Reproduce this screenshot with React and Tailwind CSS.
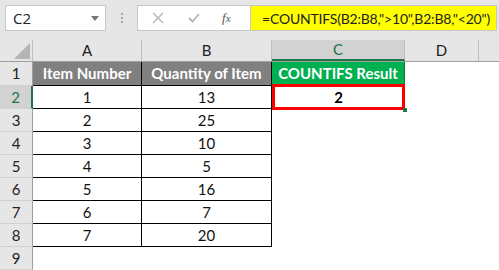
import React from 'react';

const rows = [
  ['1', '13'],
  ['2', '25'],
  ['3', '10'],
  ['4', '5'],
  ['5', '16'],
  ['6', '7'],
  ['7', '20'],
];

const cellFont = { fontFamily: 'Lato, "Liberation Sans", sans-serif' };

const RowHead = ({ n, active }) => (
  <div
    className={`h-[23px] flex items-center justify-center text-[15px] border-b border-[#d0d0d0] ${
      active ? 'bg-[#d2d2d2] text-[#217346] border-r-2 border-r-[#217346]' : 'bg-[#e6e6e6] text-[#222] border-r border-r-[#9e9e9e]'
    }`}
    style={cellFont}
  >
    {n}
  </div>
);

const App = () => {
  return (
    <div className="w-[499px] h-[270px] bg-white overflow-hidden relative select-none">
      {/* Formula bar */}
      <div className="h-[40px] bg-[#e6e6e6] flex items-start pt-[5px] pl-[5px]">
        <div className="w-[101px] h-[26px] bg-white border border-[#c6c6c6] flex items-center justify-between pl-[7px] pr-[6px]">
          <span className="text-[15px] text-[#222]" style={{ fontFamily: '"Open Sans", sans-serif' }}>C2</span>
          <svg width="8" height="5" viewBox="0 0 8 5"><path d="M0 0h8L4 5z" fill="#777" /></svg>
        </div>
        <div className="w-[31px] h-[26px] flex flex-col items-center justify-center gap-[2px]">
          <span className="w-[2px] h-[2px] bg-[#a8a8a8]" />
          <span className="w-[2px] h-[2px] bg-[#a8a8a8]" />
          <span className="w-[2px] h-[2px] bg-[#a8a8a8]" />
        </div>
        <div className="w-[113px] h-[26px] bg-white border border-[#c6c6c6] border-r-0 flex items-center">
          <svg width="12" height="12" viewBox="0 0 12 12" className="ml-[14px]">
            <path d="M1 1l10 10M11 1L1 11" stroke="#b4b4b4" strokeWidth="1.4" />
          </svg>
          <svg width="12" height="10" viewBox="0 0 12 10" className="ml-[24px]">
            <path d="M1 5l3.5 3.5L11 1" stroke="#b4b4b4" strokeWidth="1.8" fill="none" />
          </svg>
          <span className="ml-[22px] text-[13px] italic text-[#555]" style={{ fontFamily: '"Liberation Serif", serif' }}>
            f<span className="text-[11px]">x</span>
          </span>
        </div>
        <div className="w-[247px] h-[26px] bg-[#ffff00] border border-[#c6c6c6] flex items-center pl-[11px] overflow-hidden">
          <span className="text-[14px] text-[#222] tracking-[-0.2px] whitespace-nowrap" style={cellFont}>
            =COUNTIFS(B2:B8,"&gt;10",B2:B8,"&lt;20")
          </span>
        </div>
      </div>

      {/* Column headers */}
      <div className="h-[22px] flex bg-[#e6e6e6] border-b border-[#9e9e9e] text-[15px] text-[#222]" style={cellFont}>
        <div className="w-[33px] border-r border-[#bdbdbd] flex items-end justify-end pr-[2px] pb-[2px]">
          <svg width="16" height="16" viewBox="0 0 16 16"><path d="M16 0v16H0z" fill="#b4b4b4" /></svg>
        </div>
        <div className="w-[109px] border-r border-[#bdbdbd] flex items-center justify-center">A</div>
        <div className="w-[130px] border-r border-[#bdbdbd] flex items-center justify-center">B</div>
        <div className="w-[133px] border-r border-[#bdbdbd] bg-[#d2d2d2] text-[#217346] border-b-2 border-b-[#217346] flex items-center justify-center">C</div>
        <div className="w-[74px] border-r border-[#bdbdbd] flex items-center justify-center">D</div>
        <div className="flex-1" />
      </div>

      {/* Sheet body */}
      <div className="flex">
        <div className="w-[33px] flex flex-col">
          <div className="h-[24px] flex items-center justify-center text-[15px] bg-[#e6e6e6] text-[#222] border-b border-[#d0d0d0] border-r border-r-[#9e9e9e]" style={cellFont}>1</div>
          <RowHead n="2" active />
          {[3, 4, 5, 6, 7, 8, 9].map((n) => (
            <RowHead key={n} n={n} />
          ))}
        </div>

        <div className="flex flex-col" style={cellFont}>
          {/* Row 1 */}
          <div className="h-[24px] flex text-[15px] font-bold text-white border-b border-black">
            <div className="w-[109px] bg-[#808080] border-r border-black flex items-center justify-center">Item Number</div>
            <div className="w-[130px] bg-[#808080] border-r border-black flex items-center justify-center">Quantity of Item</div>
            <div className="w-[133px] bg-[#00b050] border-r border-[#0b7a3c] flex items-center justify-center">COUNTIFS Result</div>
          </div>
          {rows.map(([a, b], i) => (
            <div key={i} className="h-[23px] flex text-[15px] text-[#111]">
              <div className="w-[109px] border-r border-b border-black flex items-center justify-center">{a}</div>
              <div className="w-[130px] border-r border-b border-black flex items-center justify-center">{b}</div>
              {i === 0 ? (
                <div className="w-[133px] relative flex items-center justify-center font-bold text-black">
                  <div className="absolute left-0 top-[-2px] w-[133px] h-[26px] border-[3px] border-[#ff0000]" />
                  <div className="absolute right-[-2px] bottom-[-3px] w-[4px] h-[4px] bg-[#217346]" />
                  2
                </div>
              ) : null}
            </div>
          ))}
        </div>
      </div>
    </div>
  );
};

export default App;
